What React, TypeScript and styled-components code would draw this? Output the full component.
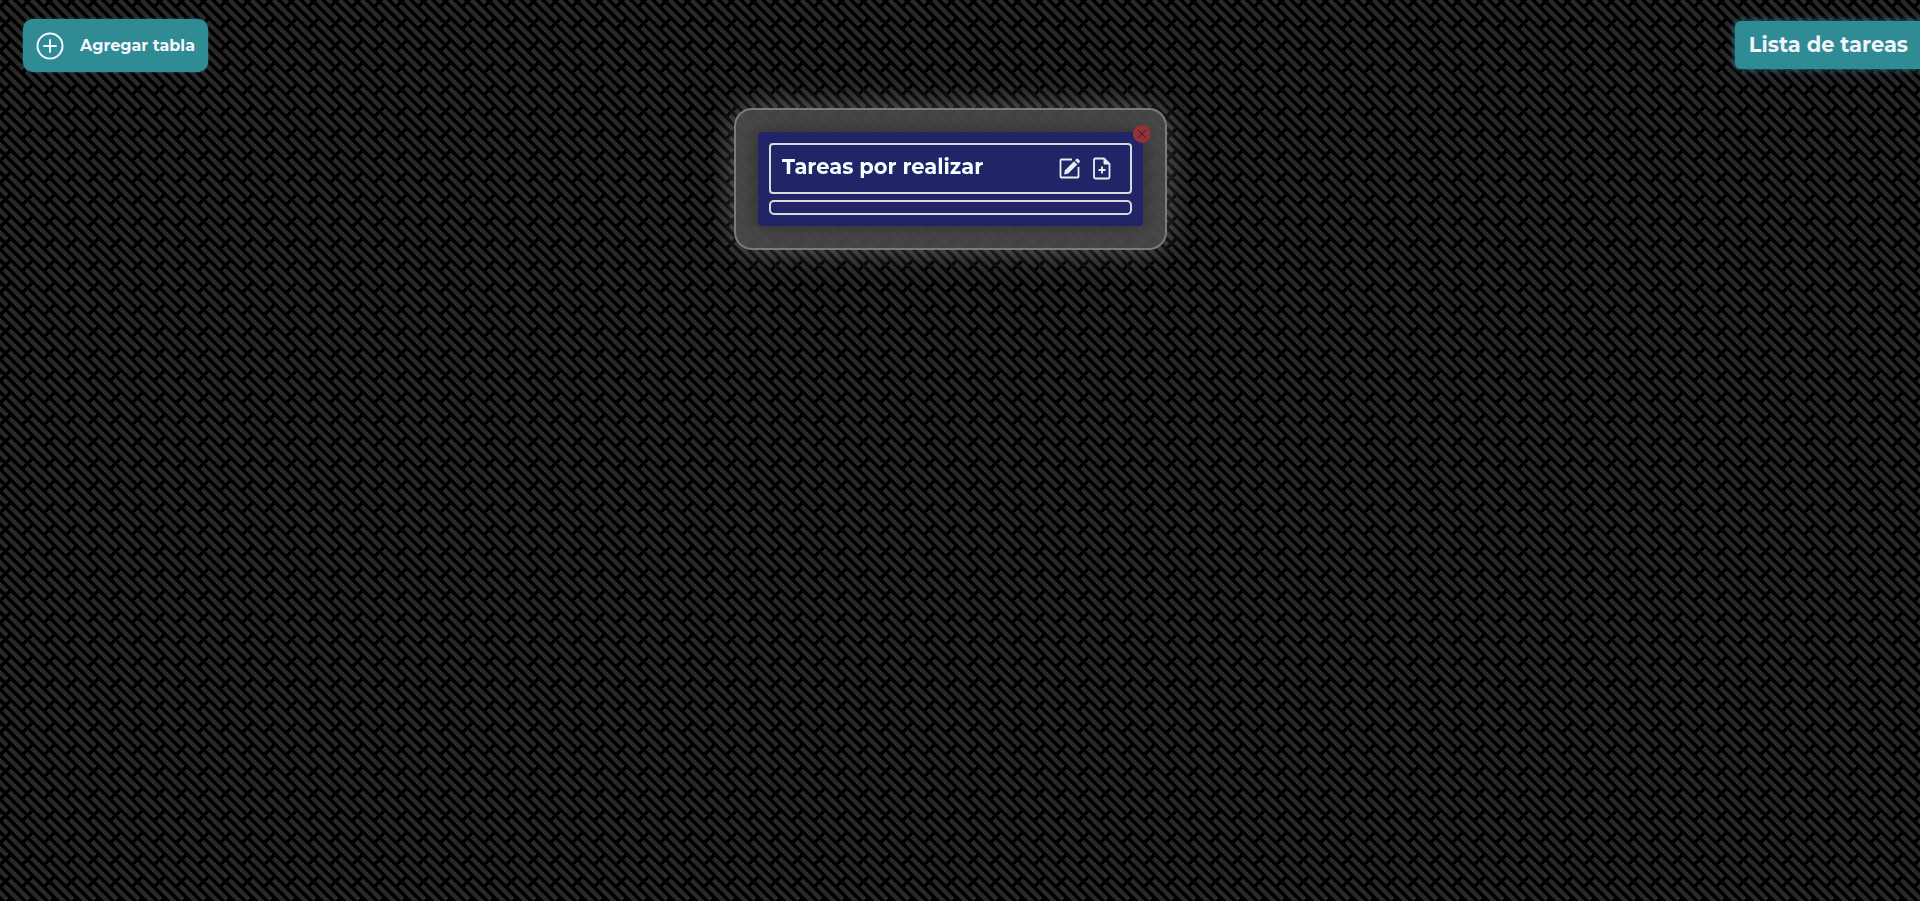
import React from 'react';
import styled, { createGlobalStyle } from 'styled-components';

const Global = createGlobalStyle`
  *, *::before, *::after { box-sizing: border-box; }
  body {
    margin: 0;
    min-height: 100vh;
    font-family: Montserrat, Inter, "Liberation Sans", sans-serif;
    background-image:
      linear-gradient(135deg, #0000 18.75%, #000 0 31.25%, #0000 0),
      repeating-linear-gradient(45deg, #000 -6.25% 6.25%, #282828 0 18.75%);
    background-size: 22px 22px;
    background-position: 0 -4px;
  }
  button { font-family: inherit; cursor: pointer; }
`;

const TopBar = styled.header`
  display: flex;
  align-items: flex-start;
  justify-content: space-between;
  padding: 19px 0 0 23px;
`;

const AddBoardButton = styled.button`
  display: flex;
  align-items: center;
  gap: 16px;
  height: 53px;
  padding: 0 13px;
  border: 0;
  border-radius: 10px;
  background: #2f8b94;
  box-shadow: 0 0 2px #2f8b94;
  color: #f5f8ff;
  font-size: 16px;
  font-weight: 700;
`;

const ListTab = styled.h1`
  margin: 2px 0 0;
  padding: 0 12px 0 14px;
  border-radius: 6px 0 0 6px;
  background: #2f8b94;
  box-shadow: 0 0 6px #2f8b94;
  color: #f0f4f8;
  font-size: 21px;
  font-weight: 700;
  line-height: 48px;
`;

const Boards = styled.main`
  display: flex;
  justify-content: center;
  padding: 36px 19px 36px 0;
`;

const BoardFrame = styled.section`
  width: 433px;
  padding: 22px;
  border: 2px solid #7b7b7b;
  border-radius: 18px;
  background: rgba(92, 92, 92, 0.7);
  backdrop-filter: blur(2px);
  box-shadow: 0 0 30px rgba(255, 255, 255, 0.25);
`;

const Board = styled.article`
  position: relative;
  display: grid;
  gap: 6px;
  padding: 11px;
  border-radius: 4px;
  background: #222468;
  box-shadow: 0 0 20px rgba(0, 0, 0, 0.35);
`;

const BoardHeader = styled.div`
  display: flex;
  align-items: center;
  justify-content: space-between;
  height: 51px;
  padding: 0 16px 0 11px;
  border: 2px solid #dadada;
  border-radius: 4px;
  color: #f5ffff;
`;

const BoardTitle = styled.h2`
  margin: 0;
  padding-bottom: 4px;
  font-size: 21px;
  font-weight: 700;
`;

const Actions = styled.div`
  display: flex;
  gap: 8px;
`;

const IconButton = styled.button`
  display: flex;
  padding: 0;
  border: 0;
  background: none;
  color: #e8f0f0;
`;

const TaskList = styled.ul`
  height: 15px;
  margin: 0;
  padding: 0;
  border: 2px solid #dadada;
  border-radius: 5px;
  list-style: none;
`;

const CloseButton = styled.button`
  position: absolute;
  top: -7px;
  right: -8px;
  display: flex;
  align-items: center;
  justify-content: center;
  width: 18px;
  height: 18px;
  padding: 0;
  border: 0;
  border-radius: 50%;
  background: #973138;
  color: #222448;
`;

const PlusCircleIcon = () => (
  <svg width="28" height="28" viewBox="0 0 28 28" fill="none" stroke="currentColor" strokeWidth="2" strokeLinecap="round">
    <circle cx="14" cy="14" r="12.5" />
    <path d="M14 8v12M8 14h12" />
  </svg>
);

const EditIcon = () => (
  <svg width="24" height="24" viewBox="0 0 24 24" fill="none" stroke="currentColor" strokeWidth="1.8" strokeLinejoin="round">
    <path d="M14 2.500H3.500Q2.500 2.500 2.500 3.500V19.500Q2.500 20.500 3.500 20.500H19.500Q20.500 20.500 20.500 19.500V10" />
    <path d="M6 17.500L7 13.200L16 4.200L19.300 7.500L10.300 16.500Z" fill="currentColor" stroke="none" />
    <path d="M17 3.200L18.300 1.900Q19.200 1 20.100 1.900L21.600 3.400Q22.500 4.300 21.600 5.200L20.300 6.500Z" fill="currentColor" stroke="none" />
  </svg>
);

const AddFileIcon = () => (
  <svg width="24" height="24" viewBox="0 0 24 24" fill="none" stroke="currentColor" strokeWidth="1.8" strokeLinejoin="round">
    <path d="M14 1.500H5.500Q4 1.500 4 3V20Q4 21.500 5.500 21.500H18Q19.500 21.500 19.500 20V7Z" />
    <path d="M14 1.500V7H19.500Z" fill="currentColor" strokeWidth="1" />
    <path d="M12 9.500v7M8.500 13h7" />
  </svg>
);

const CloseIcon = () => (
  <svg width="10" height="10" viewBox="0 0 10 10" stroke="currentColor">
    <path d="M1 1l8 8M9 1L1 9" />
  </svg>
);

export default function App() {
  return (
    <>
      <Global />
      <TopBar>
        <AddBoardButton type="button">
          <PlusCircleIcon />
          Agregar tabla
        </AddBoardButton>
        <ListTab>Lista de tareas</ListTab>
      </TopBar>
      <Boards>
        <BoardFrame>
          <Board>
            <BoardHeader>
              <BoardTitle>Tareas por realizar</BoardTitle>
              <Actions>
                <IconButton type="button" aria-label="Editar tabla"><EditIcon /></IconButton>
                <IconButton type="button" aria-label="Agregar tarea"><AddFileIcon /></IconButton>
              </Actions>
            </BoardHeader>
            <TaskList />
            <CloseButton type="button" aria-label="Eliminar tabla"><CloseIcon /></CloseButton>
          </Board>
        </BoardFrame>
      </Boards>
    </>
  );
}
